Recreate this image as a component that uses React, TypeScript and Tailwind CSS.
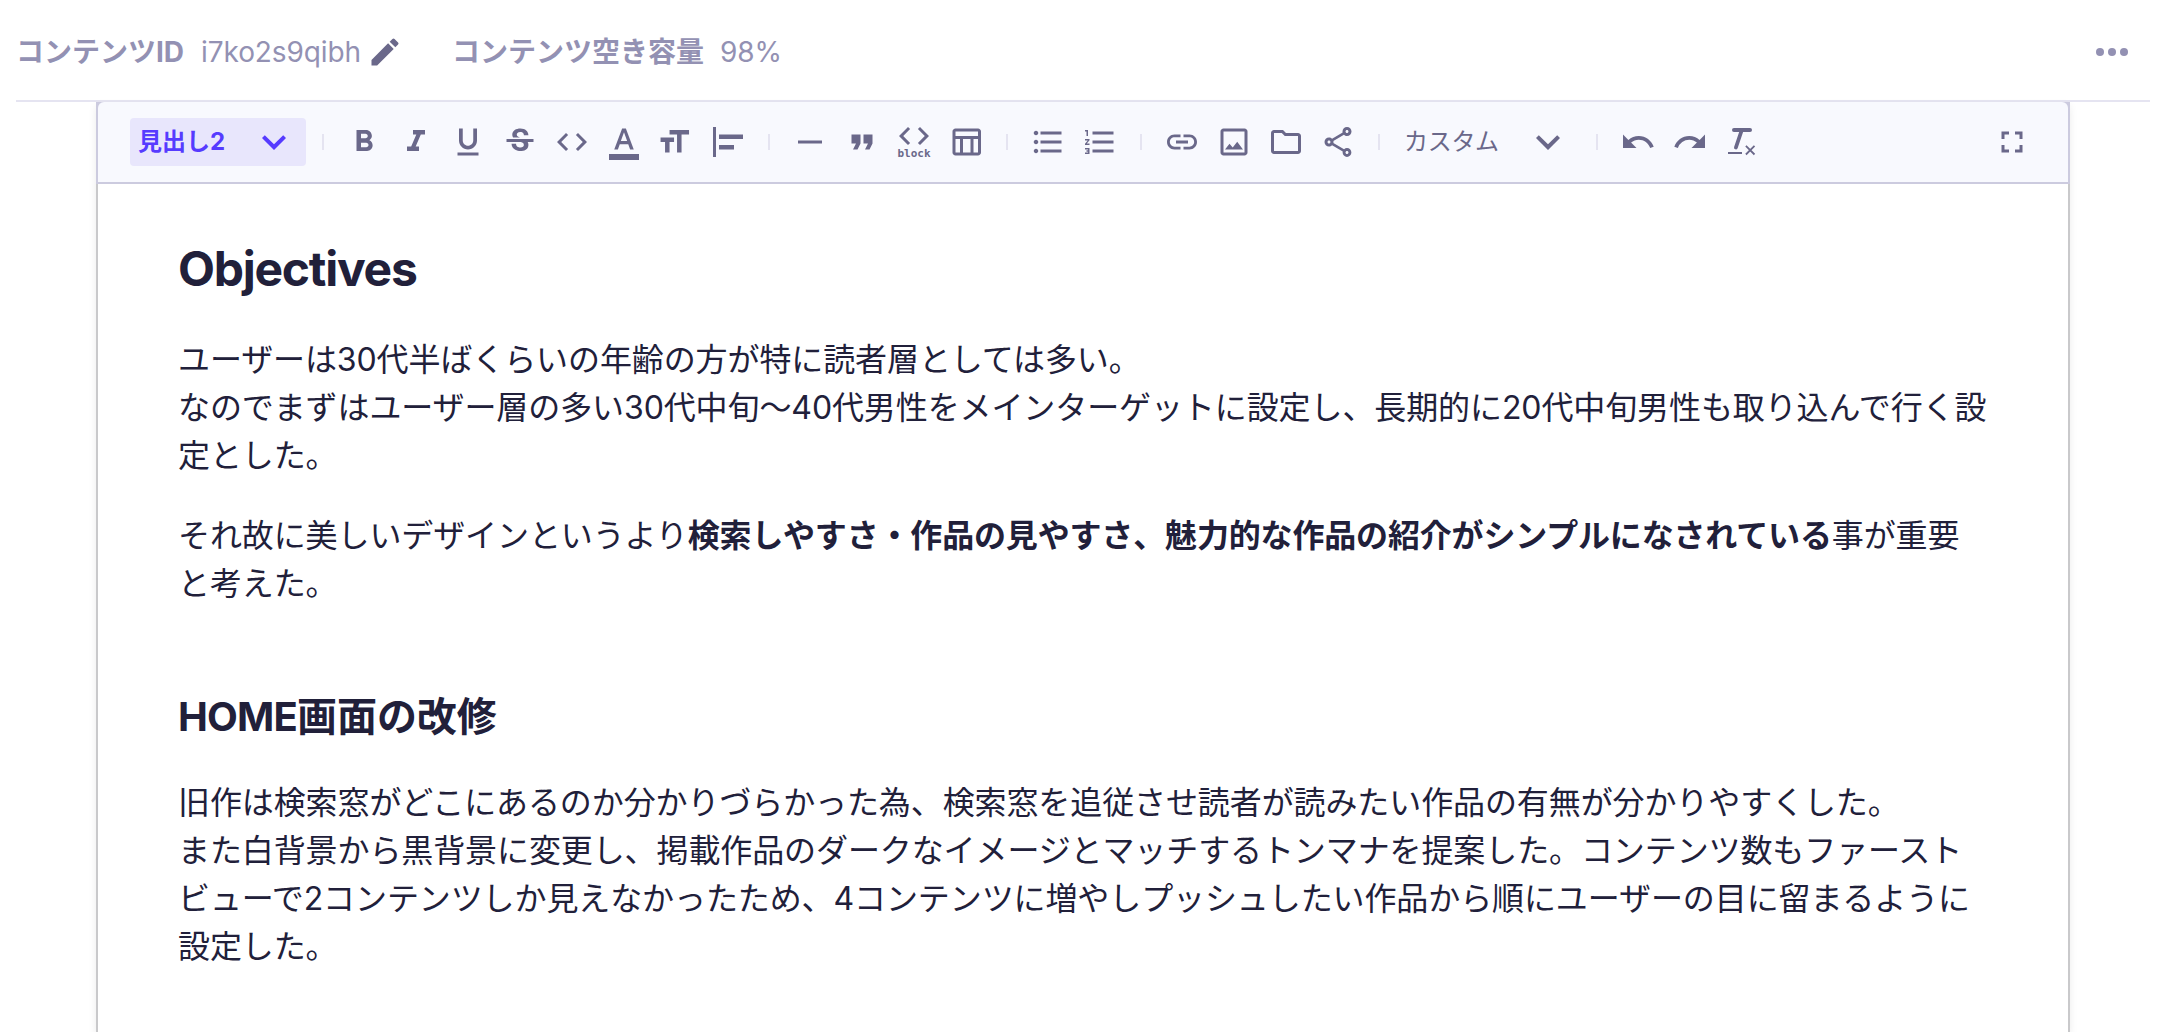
import React from 'react';
import type { IconType } from 'react-icons';
import {
  MdAlignHorizontalLeft,
  MdCode,
  MdEdit,
  MdExpandMore,
  MdFormatBold,
  MdFormatColorText,
  MdFormatItalic,
  MdFormatListBulleted,
  MdFormatListNumbered,
  MdFormatQuote,
  MdFormatUnderlined,
  MdFullscreen,
  MdHorizontalRule,
  MdInsertLink,
  MdOutlineFolder,
  MdOutlineInsertPhoto,
  MdOutlineShare,
  MdOutlineTableChart,
  MdRedo,
  MdStrikethroughS,
  MdUndo,
} from 'react-icons/md';

interface ToolButtonProps {
  label: string;
  icon?: IconType;
  children?: React.ReactNode;
}

const ToolButton: React.FC<ToolButtonProps> = ({ label, icon: Icon, children }) => (
  <button type="button" aria-label={label} className="flex h-12 w-[52px] shrink-0 items-center justify-center">
    {Icon ? <Icon className="size-9" /> : children}
  </button>
);

const Separator = () => (
  <div className="flex w-[30px] shrink-0 justify-center">
    <div className="h-4 w-0.5 bg-[#e5e4f1]" />
  </div>
);

const FontSizeIcon = () => (
  <svg viewBox="0 0 24 24" className="size-9" fill="currentColor">
    <path d="M7.7 4v3h5v12h3V7h5V4h-13zm-6 8h3v7h3v-7h3V9h-9v3z" />
  </svg>
);

const ClearFormatIcon = () => (
  <svg viewBox="0 0 36 36" className="size-9" fill="none" stroke="currentColor">
    <path d="M10 6h16" strokeWidth="4" strokeLinecap="round" />
    <path d="M17.8 6l-5.9 17.5" strokeWidth="3.8" strokeLinecap="round" />
    <path d="M4 29h14" strokeWidth="2" />
    <path d="M21.9 21.9l8.6 8.6m0-8.6l-8.6 8.6" strokeWidth="1.8" />
  </svg>
);

const ContentHeader = () => (
  <header className="mx-4 mr-[18px] flex h-[102px] items-center border-b-2 border-[#e5e4f1] pt-1 text-[28px] text-[#9391b3]">
    <span className="font-bold">コンテンツID</span>
    <span className="ml-[17px] tracking-[-0.1px]">i7ko2s9qibh</span>
    <MdEdit className="ml-1.5 size-9 text-[#6a688a]" />
    <span className="ml-[49px] font-bold">コンテンツ空き容量</span>
    <span className="ml-4 tracking-[-0.1px]">98%</span>
    <button type="button" aria-label="メニュー" className="mr-[22px] ml-auto flex gap-1">
      <span className="size-2 rounded-full bg-[#9391b3]" />
      <span className="size-2 rounded-full bg-[#9391b3]" />
      <span className="size-2 rounded-full bg-[#9391b3]" />
    </button>
  </header>
);

const Toolbar = () => (
  <div className="-mx-0.5 bg-[#cccbdf] px-0.5 pb-0.5">
    <div className="flex h-20 items-center rounded-t-md bg-[#f8f9fe] px-8 text-[#6a688a]">
      <button type="button" className="mr-0.5 flex h-12 w-44 shrink-0 items-center justify-between rounded bg-[#e8e6fc] px-2 text-[#563bff]">
        <span className="text-2xl font-bold">見出し2</span>
        <MdExpandMore className="size-12" />
      </button>
      <Separator />
      <ToolButton label="太字" icon={MdFormatBold} />
      <ToolButton label="斜体" icon={MdFormatItalic} />
      <ToolButton label="下線" icon={MdFormatUnderlined} />
      <ToolButton label="取り消し線" icon={MdStrikethroughS} />
      <ToolButton label="コード" icon={MdCode} />
      <ToolButton label="文字色" icon={MdFormatColorText} />
      <ToolButton label="文字サイズ">
        <FontSizeIcon />
      </ToolButton>
      <ToolButton label="配置" icon={MdAlignHorizontalLeft} />
      <Separator />
      <ToolButton label="水平線" icon={MdHorizontalRule} />
      <ToolButton label="引用" icon={MdFormatQuote} />
      <ToolButton label="コードブロック">
        <span className="flex h-9 flex-col items-center">
          <MdCode className="-mt-1.5 size-9 shrink-0" />
          <span className="-mt-1.5 font-['DejaVu_Sans_Mono',monospace] text-[11px] leading-3 font-bold">block</span>
        </span>
      </ToolButton>
      <ToolButton label="表" icon={MdOutlineTableChart} />
      <Separator />
      <ToolButton label="箇条書き" icon={MdFormatListBulleted} />
      <ToolButton label="番号付きリスト" icon={MdFormatListNumbered} />
      <Separator />
      <ToolButton label="リンク" icon={MdInsertLink} />
      <ToolButton label="画像" icon={MdOutlineInsertPhoto} />
      <ToolButton label="ファイル" icon={MdOutlineFolder} />
      <ToolButton label="埋め込み" icon={MdOutlineShare} />
      <Separator />
      <button type="button" className="mr-2.5 ml-0.5 flex h-12 w-44 shrink-0 items-center justify-between pl-2">
        <span className="text-2xl tracking-[-0.3px]">カスタム</span>
        <MdExpandMore className="size-12" />
      </button>
      <Separator />
      <ToolButton label="元に戻す" icon={MdUndo} />
      <ToolButton label="やり直す" icon={MdRedo} />
      <ToolButton label="書式をクリア">
        <ClearFormatIcon />
      </ToolButton>
      <button type="button" aria-label="全画面" className="mr-1.5 ml-auto">
        <MdFullscreen className="size-9" />
      </button>
    </div>
  </div>
);

const Article = () => (
  <article className="px-20 pt-[49px] text-[32px] leading-[48px] tracking-[-0.1px] text-[#21203a]">
    <h2 className="text-[48px] leading-[72px] font-bold tracking-[-0.026em]">Objectives</h2>
    <p className="mt-[31px]">
      ユーザーは30代半ばくらいの年齢の方が特に読者層としては多い。
      <br />
      なのでまずはユーザー層の多い30代中旬〜40代男性をメインターゲットに設定し、長期的に20代中旬男性も取り込んで行く設
      <br />
      定とした。
    </p>
    <p className="mt-8">
      それ故に美しいデザインというより
      <strong className="font-bold tracking-[-0.16px]">検索しやすさ・作品の見やすさ、魅力的な作品の紹介がシンプルになされている</strong>
      事が重要
      <br />
      と考えた。
    </p>
    <h3 className="mt-[79px] text-[40px] leading-[60px] font-bold">
      <span className="tracking-[-0.02em]">HOME</span>画面の改修
    </h3>
    <p className="mt-8">
      旧作は検索窓がどこにあるのか分かりづらかった為、検索窓を追従させ読者が読みたい作品の有無が分かりやすくした。
      <br />
      また白背景から黒背景に変更し、掲載作品のダークなイメージとマッチするトンマナを提案した。コンテンツ数もファースト
      <br />
      ビューで2コンテンツしか見えなかったため、4コンテンツに増やしプッシュしたい作品から順にユーザーの目に留まるように
      <br />
      設定した。
    </p>
  </article>
);

export default function App() {
  return (
    <div className="flex h-[1032px] w-[2168px] flex-col overflow-hidden bg-white font-[Inter,'Noto_Sans_CJK_JP',sans-serif]">
      <ContentHeader />
      <main className="mr-[98px] ml-24 flex-1 border-x-2 border-[#c9c9cb] whitespace-nowrap shadow-[0_4px_8px_rgba(0,0,0,0.08)]">
        <Toolbar />
        <Article />
      </main>
    </div>
  );
}
